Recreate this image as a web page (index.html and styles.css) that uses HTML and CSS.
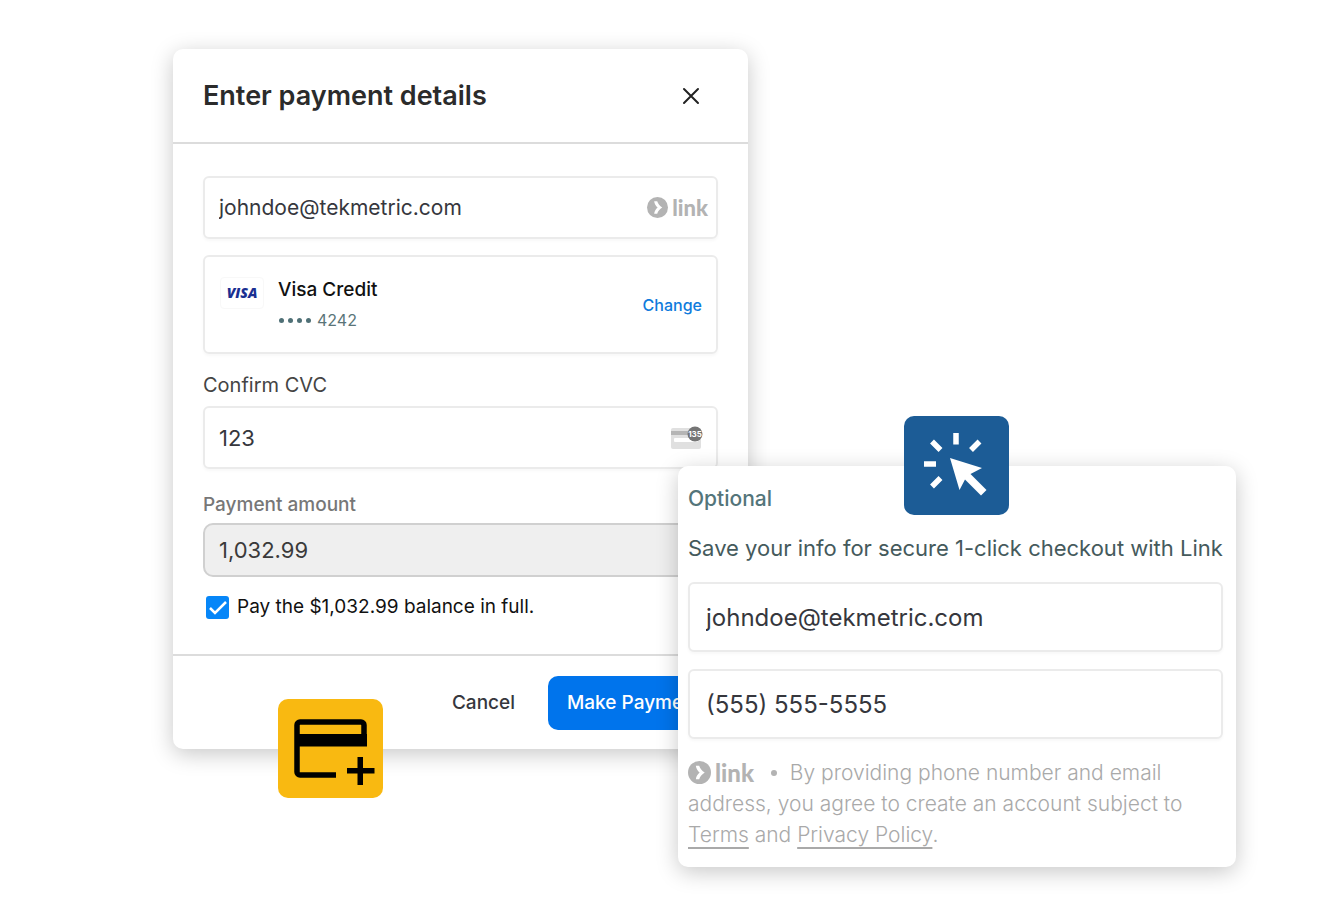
FILE: index.html
```html
<!DOCTYPE html>
<html lang="en">
<head>
  <meta charset="UTF-8">
  <meta name="viewport" content="width=device-width, initial-scale=1.0">
  <title>Enter payment details</title>
  <link rel="stylesheet" href="styles.css">
</head>
<body>
  <main class="showcase">
    <!-- Payment dialog -->
    <form class="modal">
      <header class="modal-header">
        <h1>Enter payment details</h1>
        <button type="button" class="close-btn" aria-label="Close">
          <svg width="18" height="18" viewBox="0 0 18 18" fill="none" stroke="#222" stroke-width="2" stroke-linecap="round">
            <path d="M2 2l14 14M16 2L2 16"/>
          </svg>
        </button>
      </header>

      <div class="modal-body">
        <div class="field email-field">
          <input type="email" value="johndoe@tekmetric.com" aria-label="Email">
          <span class="link-logo">
            <svg viewBox="0 0 22 22" width="21" height="21">
              <circle cx="11" cy="11" r="11" fill="#b3b3b3"/>
              <path d="M7.500 4.500h3.200c.8 2.700 2.700 4.800 5.300 6.500-2.600 1.700-4.500 3.800-5.300 6.500H7.500c.3-2.600 1.700-4.900 3.600-6.500-1.900-1.600-3.300-3.900-3.600-6.500z" fill="#fff"/>
            </svg>
            link
          </span>
        </div>

        <div class="saved-card">
          <div class="visa-logo">VISA</div>
          <div class="card-info">
            <div class="card-name">Visa Credit</div>
            <div class="card-number"><span class="dots"><i></i><i></i><i></i><i></i></span>4242</div>
          </div>
          <button type="button" class="change-btn">Change</button>
        </div>

        <label class="cvc-label" for="cvc">Confirm CVC</label>
        <div class="field cvc-field">
          <input type="text" id="cvc" value="123">
          <svg class="cvc-icon" width="32" height="24" viewBox="0 0 32 24">
            <rect x="0" y="2" width="30" height="21" rx="2" fill="#e0e0e0"/>
            <rect x="0" y="5" width="30" height="4" fill="#b5b5b5"/>
            <rect x="3" y="12" width="24" height="4" rx="1" fill="#fff"/>
            <circle cx="24" cy="8" r="7.500" fill="#757575"/>
            <text x="24" y="11" text-anchor="middle" font-size="8" font-weight="700" fill="#fff">135</text>
          </svg>
        </div>

        <label class="amount-label" for="amount">Payment amount</label>
        <input type="text" id="amount" class="amount" value="1,032.99" readonly>

        <label class="pay-full">
          <input type="checkbox" checked>
          Pay the $1,032.99 balance in full.
        </label>
      </div>

      <footer class="modal-footer">
        <button type="button" class="cancel-btn">Cancel</button>
        <button type="button" class="pay-btn">Make Payment</button>
      </footer>

      <div class="badge badge-card">
        <svg width="105" height="99" viewBox="0 0 105 99">
          <path d="M58 76H22a3 3 0 0 1-3-3V26a3 3 0 0 1 3-3h61a3 3 0 0 1 3 3v18" fill="none" stroke="#000" stroke-width="5.500"/>
          <path d="M18 35h71v12.500H18zM79.500 58h5.500v11h11.500v5.500H85v11.500h-5.500V74.500H69V69h10.500z"/>
        </svg>
      </div>
    </form>

    <!-- Link sign up panel -->
    <section class="link-panel">
      <h2>Optional</h2>
      <p class="save-text">Save your info for secure 1-click checkout with Link</p>
      <input type="email" value="johndoe@tekmetric.com" aria-label="Email">
      <input type="tel" value="(555) 555-5555" aria-label="Phone number">
      <div class="terms">
        <span class="link-logo link-logo-large">
          <svg viewBox="0 0 22 22" width="23" height="23">
            <circle cx="11" cy="11" r="11" fill="#b3b3b3"/>
            <path d="M7.500 4.500h3.200c.8 2.700 2.700 4.800 5.300 6.500-2.600 1.700-4.500 3.800-5.300 6.500H7.500c.3-2.600 1.700-4.900 3.600-6.500-1.900-1.600-3.300-3.900-3.600-6.500z" fill="#fff"/>
          </svg>
          link
        </span>
        <span class="separator"></span>
        By providing phone number and email address, you agree to create an account subject to <a href="#">Terms</a> and <a href="#">Privacy Policy</a>.
      </div>

      <div class="badge badge-click">
        <svg width="105" height="99" viewBox="0 0 105 99">
          <path d="M46 42l32 10-11.500 6L82.500 74l-5.500 5.500L61 63.500l-5.500 10.500z" fill="#fff"/>
          <path d="M52 17v11.500M20 48h12M28 25.500l8.500 8.500M75.500 25.500L67 34M28 70.500l8.500-8.500" fill="none" stroke="#fff" stroke-width="5.500"/>
        </svg>
      </div>
    </section>
  </main>
</body>
</html>
```

FILE: styles.css
```css
* {
  box-sizing: border-box;
}

body {
  margin: 0;
  background: #fff;
  font-family: Inter, "Liberation Sans", sans-serif;
  color: #36373d;
}

h1, h2, p {
  margin: 0;
}

input, button {
  font-family: inherit;
  color: inherit;
}

button {
  padding: 0;
  border: none;
  background: none;
  cursor: pointer;
}

/* The two windows share the middle column, where they overlap */
.showcase {
  display: grid;
  grid-template-columns: 173fr 505fr 70fr 488fr 98fr;
  align-items: start;
  padding: 49px 0;
}

.modal,
.link-panel {
  position: relative;
  min-width: 0;
  grid-row: 1;
  background: #fff;
  border-radius: 10px;
  box-shadow: 0 5px 22px rgba(0, 0, 0, 0.22);
}

.modal {
  grid-column: 2 / 4;
}

.modal-header {
  display: flex;
  align-items: center;
  justify-content: space-between;
  height: 95px;
  padding: 0 48px 0 30px;
  border-bottom: 2px solid #dcdcdc;
}

.modal-header h1 {
  font-size: 27px;
  font-weight: 600;
  color: #2b2b2b;
}

.close-btn svg {
  display: block;
}

.modal-body {
  display: flex;
  flex-direction: column;
  padding: 32px 30px;
}

/* Fields */
.field,
.saved-card,
.link-panel input {
  border: 2px solid #ebebeb;
  border-radius: 6px;
  box-shadow: 0 2px 3px rgba(0, 0, 0, 0.03);
}

.field {
  display: flex;
  align-items: center;
  height: 63px;
  padding: 0 13px 0 14px;
}

.email-field {
  padding-right: 8px;
}

.field input {
  flex: 1;
  min-width: 0;
  padding: 0;
  border: none;
  outline: none;
  background: none;
  font-size: 22px;
}

.email-field input {
  font-size: 21px;
}

.link-logo {
  display: inline-flex;
  align-items: center;
  gap: 4px;
  font-family: Lato, sans-serif;
  font-size: 22px;
  font-weight: 900;
  line-height: 24px;
  color: #b3b3b3;
}

/* Saved card */
.saved-card {
  display: flex;
  align-items: center;
  height: 99px;
  margin-top: 16px;
  padding: 1px 14px 0 15px;
}

.visa-logo {
  align-self: flex-start;
  width: 44px;
  height: 32px;
  margin: 19px 14px 0 0;
  border: 1px solid #f8f8f8;
  border-radius: 4px;
  font-family: "Open Sans", sans-serif;
  font-size: 14px;
  font-weight: 800;
  font-style: italic;
  line-height: 30px;
  text-align: center;
  color: #1a2f91;
}

.card-info {
  flex: 1;
}

.card-name {
  font-size: 19px;
  font-weight: 500;
  line-height: 30px;
  color: #111;
}

.card-number {
  display: flex;
  align-items: center;
  gap: 6px;
  font-size: 16px;
  line-height: 30px;
  color: #5a7478;
}

.dots {
  display: flex;
  gap: 4px;
  padding-left: 1px;
}

.dots i {
  width: 5px;
  height: 5px;
  border-radius: 50%;
  background: #4f7076;
}

.change-btn {
  font-size: 16px;
  font-weight: 500;
  color: #0f7bdc;
}

.cvc-label {
  margin-top: 16px;
  font-size: 20px;
  line-height: 30px;
  color: #444;
}

.cvc-field {
  margin-top: 6px;
}

.cvc-icon {
  font-family: Inter, sans-serif;
}

.amount-label {
  margin-top: 21px;
  font-size: 19px;
  font-weight: 500;
  line-height: 30px;
  color: #777;
}

.amount {
  height: 54px;
  margin-top: 3px;
  padding: 0 14px;
  border: 2px solid #d0d0d0;
  border-radius: 10px;
  background: #efefef;
  font-size: 22px;
  color: #3a3a3a;
}

.pay-full {
  display: flex;
  align-items: center;
  gap: 8px;
  margin-top: 15px;
  padding-left: 3px;
  font-size: 19px;
  line-height: 30px;
  color: #111;
}

.pay-full input {
  appearance: none;
  width: 23px;
  height: 23px;
  margin: 0;
  border-radius: 3px;
}

.pay-full input:checked {
  background: #0686f8 url("data:image/svg+xml,%3Csvg xmlns='http://www.w3.org/2000/svg' viewBox='0 0 23 23'%3E%3Cpath d='M4 12l5 5L20 6' fill='none' stroke='white' stroke-width='2.500'/%3E%3C/svg%3E");
}

/* Footer */
.modal-footer {
  display: flex;
  align-items: center;
  justify-content: flex-end;
  gap: 33px;
  height: 95px;
  padding: 0 28px;
  border-top: 2px solid #dcdcdc;
}

.cancel-btn,
.pay-btn {
  font-size: 19px;
  font-weight: 500;
}

.pay-btn {
  height: 54px;
  padding: 0 19px;
  border-radius: 10px;
  background: #0074ec;
  color: #fff;
}

/* Link panel */
.link-panel {
  grid-column: 3 / 5;
  margin-top: 417px;
  padding: 17px 13px 17px 10px;
}

.link-panel h2 {
  font-size: 21px;
  font-weight: 500;
  line-height: 32px;
  color: #54757a;
}

.save-text {
  margin-top: 17px;
  font-size: 22px;
  line-height: 32px;
  color: #455a5c;
}

.link-panel input {
  display: block;
  width: 100%;
  height: 70px;
  margin-top: 18px;
  padding: 0 16px;
  font-size: 24px;
}

.link-panel input + input {
  margin-top: 17px;
}

.terms {
  margin-top: 18px;
  font-size: 21px;
  font-weight: 300;
  line-height: 31px;
  color: #a9a9a9;
}

.link-logo-large {
  font-size: 24px;
  vertical-align: bottom;
  height: 31px;
}

.separator {
  display: inline-block;
  width: 6px;
  height: 6px;
  margin: 0 7px 4px 11px;
  border-radius: 50%;
  background: #b3b3b3;
}

.terms a {
  color: inherit;
  text-underline-offset: 5px;
}

/* Badges over the window edges */
.badge {
  position: absolute;
  width: 105px;
  height: 99px;
  border-radius: 10px;
}

.badge-card {
  left: 105px;
  bottom: -49px;
  background: #f9b911;
}

.badge-click {
  left: 226px;
  top: -50px;
  background: #1c5c96;
}
```
